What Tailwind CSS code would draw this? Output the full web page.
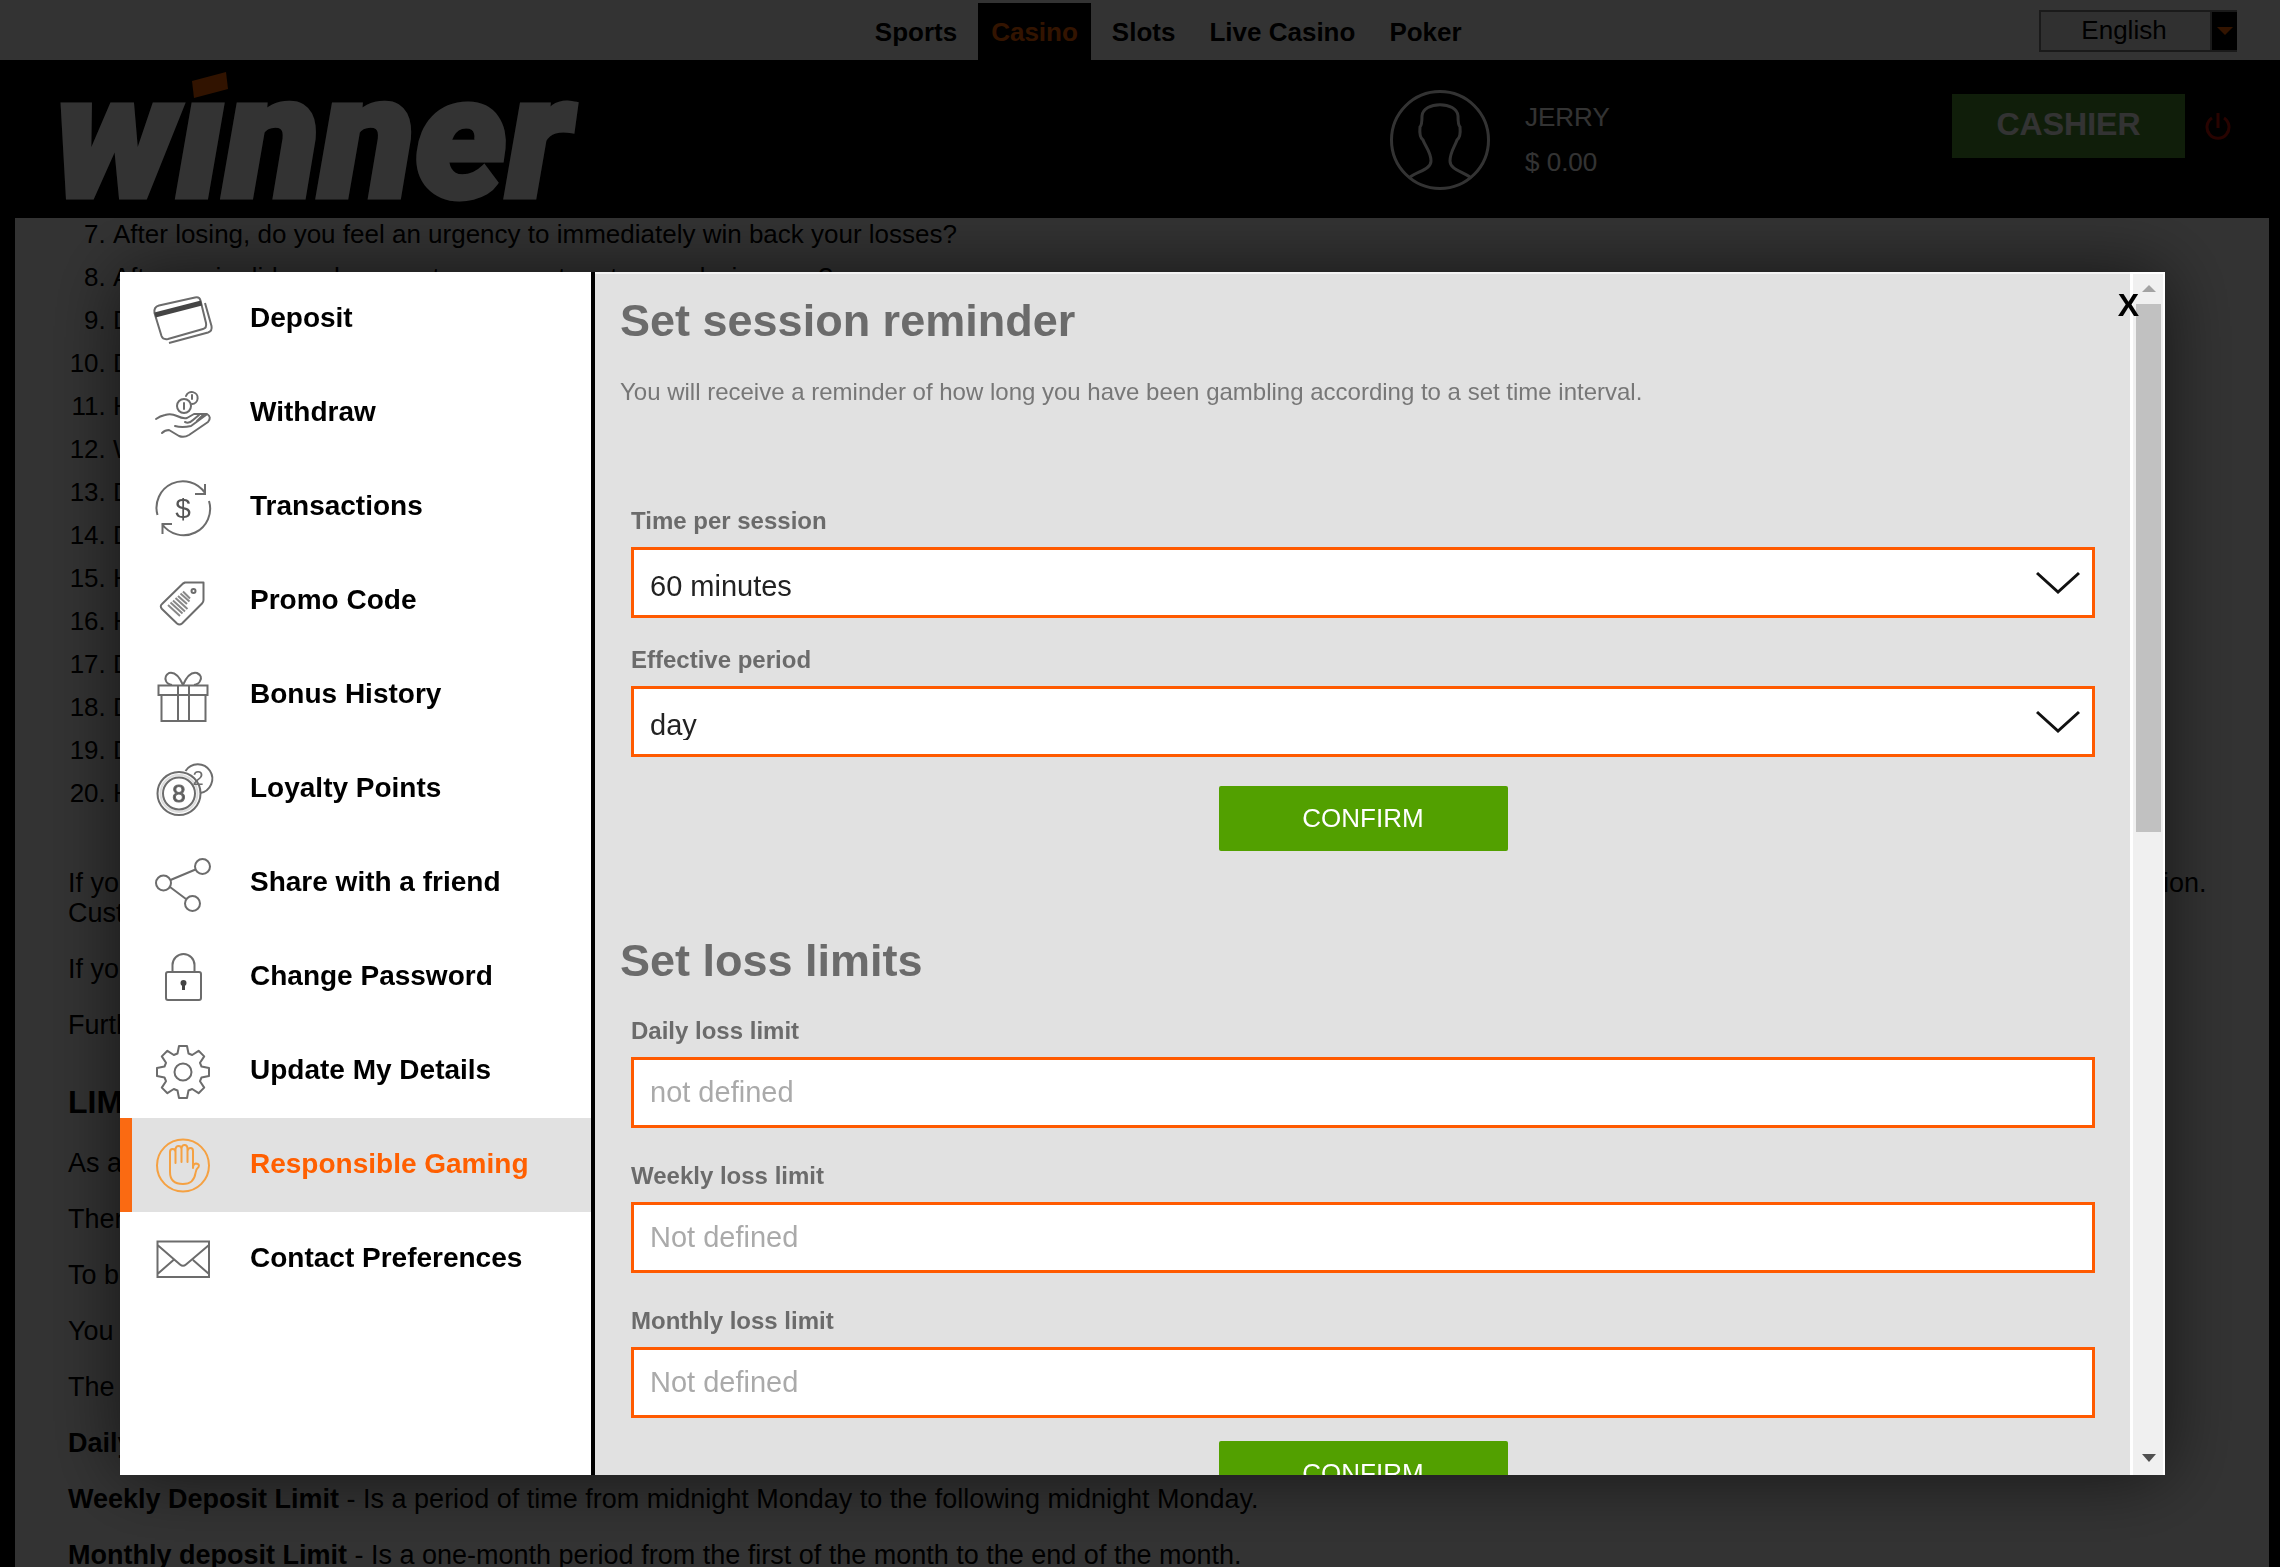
<!DOCTYPE html>
<html lang="en">
<head>
<meta charset="utf-8">
<meta name="viewport" content="width=device-width, initial-scale=1">
<title>Winner Casino</title>
<script src="https://cdn.jsdelivr.net/npm/@tailwindcss/browser@4"></script>
</head>
<body class="h-screen overflow-hidden bg-black font-['Liberation_Sans',Arial,sans-serif] text-[26px] leading-[30px] text-black">

<!-- Page -->
<div class="flex min-h-full flex-col">
  <div class="flex h-[60px] shrink-0 items-start justify-between bg-white pr-[43px] pl-[37.8%]">
    <nav class="flex gap-2 pt-[3px] font-bold">
      <a href="#" class="flex h-[57px] items-center px-[13px]">Sports</a>
      <a href="#" class="flex h-[57px] items-center bg-black px-[13px] text-[#ff6600]">Casino</a>
      <a href="#" class="flex h-[57px] items-center px-[13px]">Slots</a>
      <a href="#" class="flex h-[57px] items-center px-[13px]">Live Casino</a>
      <a href="#" class="flex h-[57px] items-center px-[13px]">Poker</a>
    </nav>
    <div class="relative mt-[10px] h-[42px] w-[198px]">
      <select aria-label="Language" class="h-full w-full appearance-none border-2 border-[#808080] bg-[#f0f0f0] pr-[28px] pb-[2px] text-center">
        <option>English</option>
      </select>
      <span class="pointer-events-none absolute inset-y-[2px] right-0 flex w-[27px] items-center justify-center border-l-2 border-[#808080] bg-black">
        <svg class="h-2 w-4" viewBox="0 0 16 8" fill="#ff6600"><path d="M0 0h16L8 8z"/></svg>
      </span>
    </div>
  </div>

  <header class="flex h-[158px] shrink-0 items-start bg-black pl-[54px] text-white">
    <a href="#" class="relative block h-[158px] w-[548px]" aria-label="winner">
      <span class="block pt-[18px] font-['Roboto','Liberation_Sans',sans-serif] text-[174px] leading-[120px] font-black italic [-webkit-text-stroke:5px_white]">wınner</span>
      <svg class="absolute top-[12px] left-[138px] h-[26px] w-[36px]" viewBox="0 0 36 26" fill="#f26200"><path d="M0 9 34 0l2 17L2 26z"/></svg>
    </a>
    <div class="ml-auto flex items-start">
      <svg class="mt-[30px] size-[100px]" viewBox="0 0 100 100" fill="none" stroke="#fff" stroke-width="3">
        <circle cx="50" cy="50" r="48.5"/>
        <path d="M20 87C29 81 41 79 41 71C41 62 35 56 33 50Q29 47 30 37Q32 35 32 26C33 11 67 11 68 26Q68 35 70 37Q71 47 67 50C65 56 60 62 60 71C60 79 71 81 80 87"/>
      </svg>
      <div class="mt-[35px] ml-[35px] w-[427px] leading-[45px]">
        <div>JERRY</div>
        <div>$ 0.00</div>
      </div>
      <button class="mt-[34px] h-[64px] w-[233px] bg-[#509636] pb-1 text-[32px] font-bold">CASHIER</button>
      <button aria-label="Log out" class="mt-[51px] mr-[49px] ml-[20px]">
        <svg class="h-[32px] w-[26px]" viewBox="0 0 26 32" fill="none" stroke="#c80f00" stroke-width="3"><path d="M13 2v15M7 7a11 11 0 1 0 12 0"/></svg>
      </button>
    </div>
  </header>

  <main class="mx-[15px] mr-[11px] flex-1 bg-white pt-px pr-[53px] pl-[53px]">
    <ol start="7" class="list-decimal pl-[45px] [&>li]:mb-[13px]">
      <li>After losing, do you feel an urgency to immediately win back your losses?</li>
      <li>After a win did you have a strong urge to return and win more?</li>
      <li>Did you often gamble until your last dollar was gone?</li>
      <li>Did you ever borrow to finance your gambling?</li>
      <li>Have you ever sold anything to finance gambling?</li>
      <li>Were you reluctant to use gambling money for normal expenditures?</li>
      <li>Did gambling make you careless of the welfare of your family?</li>
      <li>Did you ever gamble longer than you had planned?</li>
      <li>Have you ever gambled to escape worry or trouble?</li>
      <li>Have you ever considered an illegal act to finance gambling?</li>
      <li>Did gambling cause you to have difficulty in sleeping?</li>
      <li>Do arguments or frustrations create an urge to gamble?</li>
      <li>Did you ever have an urge to celebrate by gambling?</li>
      <li>Have you ever asked for help because of your gambling?</li>
    </ol>
    <div class="pt-[47px] text-[27px] [&>p]:mb-[26px]">
      <p>If you answered yes to most of these questions we recommend that you seek professional help, or contact our support team, who can help you with some limits or a self restriction.<br>Customer support is available at all hours.</p>
      <p>If you would like to take a break from play, ask us to close your account.</p>
      <p>Further help is available from independent organisations.</p>
      <h2 class="mt-[44px] mb-[28px] text-[32px] leading-[36px] font-bold">LIMITS</h2>
      <p>As a player you can set limits on your account.</p>
      <p>There are daily, weekly and monthly limits.</p>
      <p>To begin, open the cashier.</p>
      <p>You can lower a limit at any time.</p>
      <p>The following periods apply:</p>
      <p><b>Daily Deposit Limit</b> - Is a period of time from midnight to midnight.</p>
      <p><b>Weekly Deposit Limit</b> - Is a period of time from midnight Monday to the following midnight Monday.</p>
      <p><b>Monthly deposit Limit</b> - Is a one-month period from the first of the month to the end of the month.</p>
    </div>
  </main>
</div>

<!-- Account dialog over the dimmed page -->
<div class="fixed inset-0 flex bg-black/80 pt-[272px] pr-[115px] pb-[92px] pl-[120px]">
  <div role="dialog" aria-label="My account" class="relative flex min-w-0 flex-1 bg-white shadow-[0_0_70px_rgba(0,0,0,0.6)]">

    <nav class="w-[475px] shrink-0 overflow-hidden border-r-4 border-black text-[28px] font-bold [&_svg]:h-[94px] [&_svg]:w-[66px] [&_svg]:shrink-0 [&_svg]:fill-none [&_svg]:stroke-2 [&>a]:flex [&>a]:h-[94px] [&>a]:items-center [&>a]:gap-[34px] [&>a]:border-l-12 [&>a]:pb-[2px] [&>a]:pl-[18px]">
      <a href="#" class="border-transparent">
        <svg viewBox="0 -1 66 94" stroke="#6c6c6c">
          <path d="M9 33.500 45 25.500Q49.500 24.500 50.500 28.500L56 51Q57 56 53 57L18 67Q13 68 11.500 64L4.500 41Q3.500 35 9 33.500Z"/>
          <path d="M5 43 51.500 31" stroke="#444" class="stroke-[5]"/>
          <path d="M55 31 61.500 54Q62.500 59 58 60.500L19 71"/>
        </svg>Deposit</a>
      <a href="#" class="border-transparent">
        <svg viewBox="0 -1 66 94" stroke="#6c6c6c" stroke-linecap="round" stroke-linejoin="round">
          <circle cx="34" cy="40" r="7"/><path d="M36 30a6 6 0 1 1 6 8M34 37v6M42 29v4"/>
          <path d="M6 53Q10 50 15 49Q21 47 27 50Q33 53 37 52L44 48H57Q62 51 58 56L39 69Q34 72 29 70L19 64Q15 64 12 67"/>
          <path d="M25 60Q32 62 41 60L56 49M35 56Q39 58 43 54L49 49M47 55 53 49"/>
        </svg>Withdraw</a>
      <a href="#" class="border-transparent">
        <svg viewBox="0 -1 66 94" stroke="#6c6c6c">
          <path d="M7.500 55A26.500 26.500 0 0 1 55 33M45 34h10V24M59 41A26.500 26.500 0 0 1 12 64M22 64H12.500V74"/>
          <text x="33" y="58" text-anchor="middle" font-size="28" font-weight="400" fill="#555" stroke="none">$</text>
        </svg>Transactions</a>
      <a href="#" class="border-transparent">
        <svg viewBox="0 -1 66 94" stroke="#6c6c6c" stroke-linejoin="round">
          <path d="M35 28.500H53.500V46Q53.500 48 52 49.500L32 69.500Q29.500 71.500 27 69.500L12 55Q9.500 52 12 50L33 29.500Z"/>
          <circle cx="43.500" cy="37" r="2"/>
          <path d="M18 51l12 11M20.500 48.500l12 11M23 46.500l12 11M25.500 44l12 11M28 42l9 8M30.500 39.500l9 8M33 37.500l7 7" stroke="#888"/>
        </svg>Promo Code</a>
      <a href="#" class="border-transparent">
        <svg viewBox="0 -1 66 94" stroke="#6c6c6c">
          <path d="M8.500 37.500h49v9.500h-49zM11.500 47v26h44V47M28 37.500V73M39 37.500V73"/>
          <path d="M33 37Q27 23 19 25Q14 28 16 33Q17 36 22 37M33 37Q39 23 47 25Q53 28 50 33Q49 36 44 37"/>
        </svg>Bonus History</a>
      <a href="#" class="border-transparent">
        <svg viewBox="0 -1 66 94" stroke="#6c6c6c">
          <path d="M35.500 29A14.500 14.500 0 1 1 50 51"/>
          <circle cx="29" cy="51.500" r="21.500"/><circle cx="29" cy="51.500" r="18.500" stroke="#ddd"/><circle cx="29" cy="51.500" r="16"/>
          <text x="29" y="60" text-anchor="middle" font-size="24" font-weight="400" fill="#555" stroke="#6c6c6c" class="stroke-1">8</text>
          <text x="48" y="43" text-anchor="middle" font-size="20" font-weight="400" fill="#6c6c6c" stroke="none">2</text>
        </svg>Loyalty Points</a>
      <a href="#" class="border-transparent">
        <svg viewBox="0 -1 66 94" stroke="#6c6c6c">
          <circle cx="13.500" cy="47" r="7.500"/><circle cx="52.500" cy="30.500" r="7.500"/><circle cx="42.500" cy="67.500" r="7.500"/>
          <path d="M20.500 44 45.500 33.500M20 51 36 63"/>
        </svg>Share with a friend</a>
      <a href="#" class="border-transparent">
        <svg viewBox="0 -1 66 94" stroke="#6c6c6c">
          <rect x="16" y="42" width="35" height="28" rx="2"/>
          <path d="M22.500 42V35a11 11 0 0 1 22 0v7"/>
          <path d="M33.500 52v8" class="stroke-[3]" stroke="#444"/><circle cx="33.500" cy="53" r="2" stroke="#444"/>
        </svg>Change Password</a>
      <a href="#" class="border-transparent">
        <svg viewBox="-33 -49 66 94" stroke="#6c6c6c" stroke-linejoin="round">
          <circle r="8.500"/>
          <path d="M-4-26H4L5.500-18.500 9.200-17 15.600-21.200 21.200-15.600 17-9.200 18.500-5.500 26-4V4L18.500 5.500 17 9.200 21.200 15.600 15.600 21.200 9.200 17 5.500 18.500 4 26H-4L-5.500 18.500-9.200 17-15.600 21.200-21.200 15.600-17 9.200-18.500 5.500-26 4V-4L-18.500-5.500-17-9.200-21.200-15.600-15.600-21.200-9.200-17-5.500-18.500Z"/>
        </svg>Update My Details</a>
      <a href="#" aria-current="page" class="border-[#fa6a12] bg-[#e1e1e1] text-[#ff5f00]">
        <svg viewBox="0 -1 66 94" stroke="#f5a142" stroke-linecap="round" stroke-linejoin="round">
          <circle cx="33" cy="47.500" r="26"/>
          <path d="M20 54V34Q20 31 22.500 31Q25.500 31 25.500 34V45M25.500 44V31Q26 28 28.500 28Q31.500 28 31.500 31V44M31.500 44V30Q32 27 34.500 27Q37.500 27 37.500 31V44M37.500 44V33Q38 30 40.500 30Q43 30 43 33V50Q43 46 46 45.500Q50 46 48.500 49Q46 51 45.500 55Q44 66 33 66Q20 66 20 54"/>
        </svg>Responsible Gaming</a>
      <a href="#" class="border-transparent">
        <svg viewBox="0 -1 66 94" stroke="#6c6c6c">
          <path d="M7.500 29.500H59V65H7.500ZM7.500 33 30 52.500Q33 55 36 52.500L59 33M7.500 62 23.500 48M59 62 43 48"/>
        </svg>Contact Preferences</a>
    </nav>

    <div class="min-w-0 flex-1 overflow-hidden border-t-2 border-[#f3f3f3] bg-[#e1e1e1] pt-[21px] pr-[35px] pl-[25px] text-[#6b6b6b]">
      <section>
        <h2 class="text-[45px] leading-[52px] font-bold">Set session reminder</h2>
        <p class="mt-[30px] mb-[100px] text-[24px] leading-[30px] text-[#777]">You will receive a reminder of how long you have been gambling according to a set time interval.</p>
        <div class="pl-[11px]">
          <label for="time" class="block text-[24px] leading-[28px] font-bold">Time per session</label>
          <div class="relative mt-[12px] mb-[28px]">
            <select id="time" class="h-[71px] w-full appearance-none border-3 border-[#ff5a00] bg-white px-4 pt-[6px] text-[29px] text-[#222]"><option>60 minutes</option></select>
            <svg class="pointer-events-none absolute top-[24px] right-[15px] h-[24px] w-[44px]" viewBox="0 0 44 24" fill="none" stroke="#111" stroke-width="3"><path d="M1 2 22 21 43 2"/></svg>
          </div>
          <label for="period" class="block text-[24px] leading-[28px] font-bold">Effective period</label>
          <div class="relative mt-[12px] mb-[29px]">
            <select id="period" class="h-[71px] w-full appearance-none border-3 border-[#ff5a00] bg-white px-4 pt-[6px] text-[29px] text-[#222]"><option>day</option></select>
            <svg class="pointer-events-none absolute top-[24px] right-[15px] h-[24px] w-[44px]" viewBox="0 0 44 24" fill="none" stroke="#111" stroke-width="3"><path d="M1 2 22 21 43 2"/></svg>
          </div>
          <button class="mx-auto block h-[65px] w-[289px] rounded-[2px] bg-[#52a000] pb-[2px] text-[26px] text-white">CONFIRM</button>
        </div>
      </section>
      <section class="mt-[84px]">
        <h2 class="mb-[30px] text-[45px] leading-[52px] font-bold">Set loss limits</h2>
        <div class="pl-[11px]">
          <label for="daily" class="block text-[24px] leading-[28px] font-bold">Daily loss limit</label>
          <input id="daily" placeholder="not defined" class="mt-[12px] mb-[34px] block h-[71px] w-full border-3 border-[#ff5a00] bg-white px-4 text-[29px] placeholder:text-[#aaa]">
          <label for="weekly" class="block text-[24px] leading-[28px] font-bold">Weekly loss limit</label>
          <input id="weekly" placeholder="Not defined" class="mt-[12px] mb-[34px] block h-[71px] w-full border-3 border-[#ff5a00] bg-white px-4 text-[29px] placeholder:text-[#aaa]">
          <label for="monthly" class="block text-[24px] leading-[28px] font-bold">Monthly loss limit</label>
          <input id="monthly" placeholder="Not defined" class="mt-[12px] mb-[23px] block h-[71px] w-full border-3 border-[#ff5a00] bg-white px-4 text-[29px] placeholder:text-[#aaa]">
          <button class="mx-auto block h-[65px] w-[289px] rounded-[2px] bg-[#52a000] pb-[2px] text-[26px] text-white">CONFIRM</button>
        </div>
      </section>
    </div>

    <!-- Scroll bar -->
    <div class="flex w-[35px] shrink-0 flex-col items-center border-t-2 border-r-2 border-l-3 border-white bg-[#f0f0f0] pl-px">
      <svg class="mt-[11px] mb-3 h-[7px] w-[14px]" viewBox="0 0 14 7" fill="#a3a3a3"><path d="M0 7 7 0l7 7z"/></svg>
      <div class="h-[528px] w-[25px] bg-[#c1c1c1]"></div>
      <svg class="mt-auto mb-[13px] h-[8px] w-[14px]" viewBox="0 0 14 8" fill="#505050"><path d="M0 0 7 8l7-8z"/></svg>
    </div>

    <button aria-label="Close" class="absolute top-[15px] right-[26px] text-[32px] leading-[36px] font-bold">X</button>
  </div>
</div>
</body>
</html>
